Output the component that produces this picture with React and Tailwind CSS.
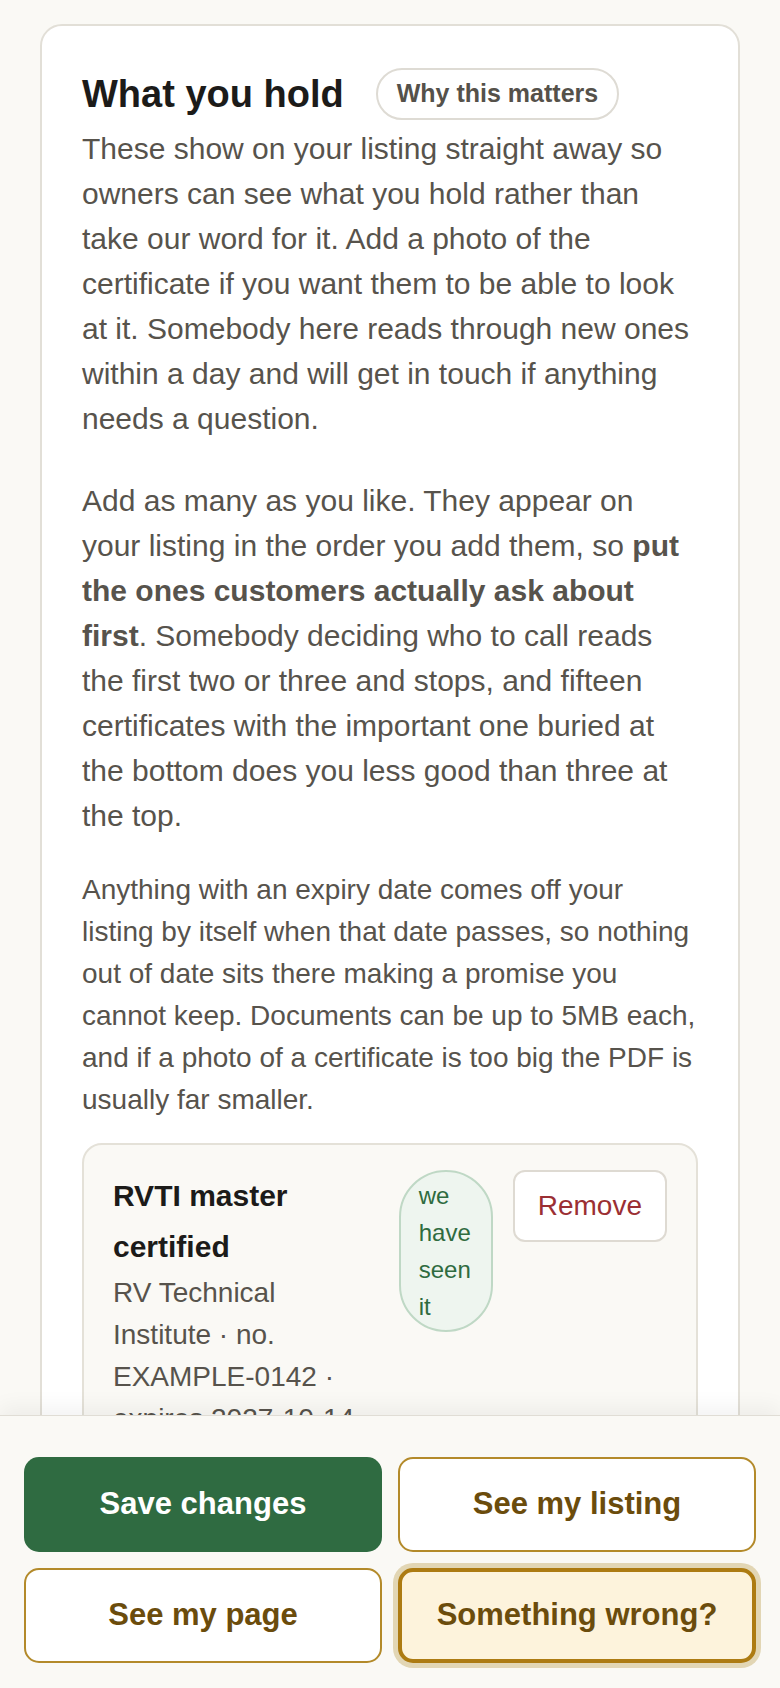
import React from 'react';

const certificates = [
  {
    id: 1,
    title: 'RVTI master certified',
    meta: 'RV Technical Institute · no. EXAMPLE-0142 · expires 2027-10-14',
    seen: true,
  },
];

const CertificateRow = ({ cert }) => (
  <div className="mt-[22px] rounded-[20px] border-2 border-[#e4e1d8] bg-[#faf9f5] px-[29px] pb-[29px] pt-[25px]">
    <div className="flex items-start gap-5">
      <div className="min-w-0 flex-1">
        <div className="text-[30px] font-bold leading-[51px] text-[#1c1b19]">{cert.title}</div>
        <div className="text-[28px] leading-[42px] text-[#57534c]">{cert.meta}</div>
      </div>
      {cert.seen && (
        <span className="w-[94px] shrink-0 rounded-full border-2 border-[#bfd8c5] bg-[#eef5ef] px-[18px] py-[5px] text-[24px] leading-[37px] text-[#2f6b3f]">
          we have seen it
        </span>
      )}
      <button className="shrink-0 rounded-[12px] border-2 border-[#dedad2] bg-white px-[23px] py-[13px] text-[28px] leading-[42px] text-[#9b2f33]">
        Remove
      </button>
    </div>
  </div>
);

export default function App() {
  return (
    <div className="flex h-screen flex-col bg-[#faf9f5] font-['Liberation_Sans',Arial,sans-serif]">
      <main className="min-h-0 flex-1 overflow-hidden px-10 pt-6">
        <section className="rounded-[22px] border-2 border-[#e2dfd7] bg-white p-10">
          <div className="mb-1 flex items-center gap-[32px]">
            <h2 className="text-[38px] font-bold leading-[56px] text-[#1c1b19]">What you hold</h2>
            <button className="flex h-[52px] items-center rounded-full border-2 border-[#dedbd4] bg-white px-[19px] text-[25px] font-bold text-[#55514a]">
              Why this matters
            </button>
          </div>

          <p className="text-[30px] leading-[45px] text-[#57534c]">
            These show on your listing straight away so owners can see what you hold rather than take our
            word for it. Add a photo of the certificate if you want them to be able to look at it. Somebody
            here reads through new ones within a day and will get in touch if anything needs a question.
          </p>

          <p className="mt-[37px] text-[30px] leading-[45px] text-[#57534c]">
            Add as many as you like. They appear on your listing in the order you add them, so{' '}
            <strong className="font-bold">put the ones customers actually ask about first</strong>. Somebody
            deciding who to call reads the first two or three and stops, and fifteen certificates with the
            important one buried at the bottom does you less good than three at the top.
          </p>

          <p className="mt-[31px] text-[28px] leading-[42px] text-[#57534c]">
            Anything with an expiry date comes off your listing by itself when that date passes, so nothing
            out of date sits there making a promise you cannot keep. Documents can be up to 5MB each, and if
            a photo of a certificate is too big the PDF is usually far smaller.
          </p>

          {certificates.map((cert) => (
            <CertificateRow key={cert.id} cert={cert} />
          ))}
        </section>
      </main>

      <footer className="relative z-10 grid grid-cols-2 gap-4 border-t border-[#e0ddd5] bg-[#faf9f5] px-6 pb-[25px] pt-[41px] shadow-[0_-8px_20px_rgba(0,0,0,0.05)]">
        <button className="h-[95px] rounded-[15px] bg-[#2f6b41] text-[31px] font-bold text-white">
          Save changes
        </button>
        <button className="h-[95px] rounded-[15px] border-2 border-[#b38a2a] bg-white text-[31px] font-bold text-[#6b4c0c]">
          See my listing
        </button>
        <button className="h-[95px] rounded-[15px] border-2 border-[#b38a2a] bg-white text-[31px] font-bold text-[#6b4c0c]">
          See my page
        </button>
        <button className="h-[95px] rounded-[15px] border-4 border-[#ad7b12] bg-[#fdf3dc] text-[31px] font-bold text-[#6b4c0c] ring-[5px] ring-[#e2d6b4]">
          Something wrong?
        </button>
      </footer>
    </div>
  );
}
